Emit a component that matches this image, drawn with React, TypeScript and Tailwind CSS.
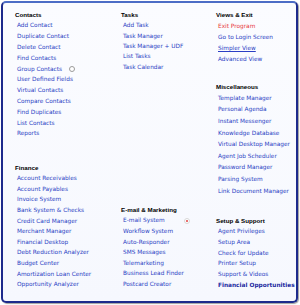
import React from "react";

type Item = {
  label: string;
  tone?: "red" | "bold" | "under";
  icon?: "ring" | "dot";
};

type Sec = {
  title: string;
  items: Item[];
  lh: string;
  mt: string;
};

const col1: Sec[] = [
  {
    title: "Contacts",
    lh: "leading-[10.8px]",
    mt: "mt-[6.6px]",
    items: [
      { label: "Add Contact" },
      { label: "Duplicate Contact" },
      { label: "Delete Contact" },
      { label: "Find Contacts" },
      { label: "Group Contacts", icon: "ring" },
      { label: "User Defined Fields" },
      { label: "Virtual Contacts" },
      { label: "Compare Contacts" },
      { label: "Find Duplicates" },
      { label: "List Contacts" },
      { label: "Reports" },
    ],
  },
  {
    title: "Finance",
    lh: "leading-[10.6px]",
    mt: "mt-[23.5px]",
    items: [
      { label: "Account Receivables" },
      { label: "Account Payables" },
      { label: "Invoice System" },
      { label: "Bank System & Checks" },
      { label: "Credit Card Manager" },
      { label: "Merchant Manager" },
      { label: "Financial Desktop" },
      { label: "Debt Reduction Analyzer" },
      { label: "Budget Center" },
      { label: "Amortization Loan Center" },
      { label: "Opportunity Analyzer" },
    ],
  },
];

const col2: Sec[] = [
  {
    title: "Tasks",
    lh: "leading-[10.4px]",
    mt: "mt-[6.8px]",
    items: [
      { label: "Add Task" },
      { label: "Task Manager" },
      { label: "Task Manager + UDF" },
      { label: "List Tasks" },
      { label: "Task Calendar" },
    ],
  },
  {
    title: "E-mail & Marketing",
    lh: "leading-[10.6px]",
    mt: "mt-[132.5px]",
    items: [
      { label: "E-mail System", icon: "dot" },
      { label: "Workflow System" },
      { label: "Auto-Responder" },
      { label: "SMS Messages" },
      { label: "Telemarketing" },
      { label: "Business Lead Finder" },
      { label: "Postcard Creator" },
    ],
  },
];

const col3: Sec[] = [
  {
    title: "Views & Exit",
    lh: "leading-[11.2px]",
    mt: "mt-[6.4px]",
    items: [
      { label: "Exit Program", tone: "red" },
      { label: "Go to Login Screen" },
      { label: "Simpler View", tone: "under" },
      { label: "Advanced View" },
    ],
  },
  {
    title: "Miscellaneous",
    lh: "leading-[11.6px]",
    mt: "mt-[15.8px]",
    items: [
      { label: "Template Manager" },
      { label: "Personal Agenda" },
      { label: "Instant Messenger" },
      { label: "Knowledge Database" },
      { label: "Virtual Desktop Manager" },
      { label: "Agent Job Scheduler" },
      { label: "Password Manager" },
      { label: "Parsing System" },
      { label: "Link Document Manager" },
    ],
  },
  {
    title: "Setup & Support",
    lh: "leading-[10.7px]",
    mt: "mt-[18.4px]",
    items: [
      { label: "Agent Privileges" },
      { label: "Setup Area" },
      { label: "Check for Update" },
      { label: "Printer Setup" },
      { label: "Support & Videos" },
      { label: "Financial Opportunities", tone: "bold" },
    ],
  },
];

function Ring() {
  return (
    <span className="ml-[7px] inline-block w-[6px] h-[6px] rounded-full border border-[#9a9a9a] bg-white" />
  );
}

function Dot() {
  return (
    <span className="ml-[19px] inline-flex w-[6px] h-[6px] items-center justify-center rounded-full border border-[#d8d8d8] bg-white">
      <span className="w-[2px] h-[2px] rounded-full bg-[#e04040]" />
    </span>
  );
}

function Link({ item }: { item: Item }) {
  let cls = "text-[#2b3fc4]";
  if (item.tone === "red") cls = "text-[#e8393d]";
  if (item.tone === "under") cls = "text-[#2b3fc4] underline";
  if (item.tone === "bold") cls = "text-[#1b2aa0] font-bold";

  return (
    <div className="flex items-center pl-[2px] whitespace-nowrap">
      <span className={cls}>{item.label}</span>
      {item.icon === "ring" && <Ring />}
      {item.icon === "dot" && <Dot />}
    </div>
  );
}

function Section({ sec }: { sec: Sec }) {
  return (
    <div className={`${sec.mt} ${sec.lh}`}>
      <div className="font-['Liberation_Sans',Arial,sans-serif] font-bold text-[6.2px] text-black">
        {sec.title}
      </div>
      {sec.items.map((it) => (
        <Link key={it.label} item={it} />
      ))}
    </div>
  );
}

export default function App() {
  return (
    <div className="w-[300px] h-[305px] bg-white pl-[1px] pt-[1px] font-['DejaVu_Sans',Verdana,sans-serif] text-[5.8px]">
      <div className="w-[297px] h-[302px] rounded-[5px] border-2 border-[#1d2a8c] border-t-[#4d6dc6] bg-gradient-to-b from-[#fbfcff] to-[#f6f8fe] shadow-[1px_1px_1px_#a0a0a0] flex pl-[12px]">
        <div className="w-[106px] flex flex-col">
          {col1.map((s) => (
            <Section key={s.title} sec={s} />
          ))}
        </div>
        <div className="w-[95px] flex flex-col">
          {col2.map((s) => (
            <Section key={s.title} sec={s} />
          ))}
        </div>
        <div className="flex-1 flex flex-col">
          {col3.map((s) => (
            <Section key={s.title} sec={s} />
          ))}
        </div>
      </div>
    </div>
  );
}
